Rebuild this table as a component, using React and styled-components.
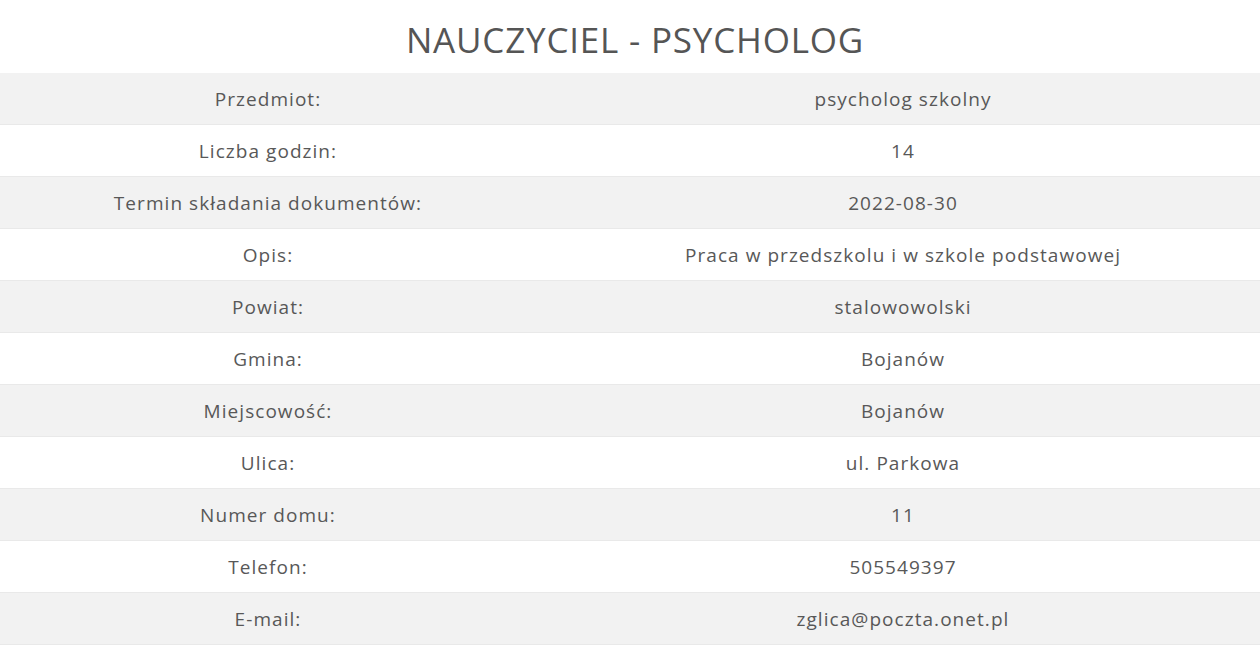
import React from 'react';
import styled, { createGlobalStyle } from 'styled-components';

const GlobalStyle = createGlobalStyle`
  body {
    margin: 0;
    background: #fff;
    font-family: 'Open Sans', 'Liberation Sans', sans-serif;
    color: #555;
  }
`;

const Page = styled.div`
  display: flex;
  flex-direction: column;
`;

const Title = styled.h1`
  margin: 0;
  height: 73px;
  display: flex;
  align-items: center;
  justify-content: center;
  padding: 6px 0 0 10px;
  box-sizing: border-box;
  font-size: 35px;
  font-weight: 400;
  letter-spacing: 0.8px;
  color: #555;
`;

const Table = styled.div`
  display: flex;
  flex-direction: column;
`;

const Row = styled.div`
  display: grid;
  grid-template-columns: 536px 1fr;
  height: 52px;
  align-items: center;
  background: ${p => (p.$odd ? '#f2f2f2' : '#fff')};
  border-bottom: 1px solid #e9e9e9;
  box-sizing: border-box;
`;

const Cell = styled.div`
  text-align: center;
  font-size: 19px;
  letter-spacing: 1.05px;
  color: #585858;
  padding-left: ${p => (p.$value ? '10px' : '0')};
`;

const rows = [
  ['Przedmiot:', 'psycholog szkolny'],
  ['Liczba godzin:', '14'],
  ['Termin składania dokumentów:', '2022-08-30'],
  ['Opis:', 'Praca w przedszkolu i w szkole podstawowej'],
  ['Powiat:', 'stalowowolski'],
  ['Gmina:', 'Bojanów'],
  ['Miejscowość:', 'Bojanów'],
  ['Ulica:', 'ul. Parkowa'],
  ['Numer domu:', '11'],
  ['Telefon:', '505549397'],
  ['E-mail:', 'zglica@poczta.onet.pl'],
];

export default function App() {
  return (
    <Page>
      <GlobalStyle />
      <Title>NAUCZYCIEL - PSYCHOLOG</Title>
      <Table>
        {rows.map(([label, value], i) => (
          <Row key={label} $odd={i % 2 === 0}>
            <Cell>{label}</Cell>
            <Cell $value>{value}</Cell>
          </Row>
        ))}
      </Table>
    </Page>
  );
}
